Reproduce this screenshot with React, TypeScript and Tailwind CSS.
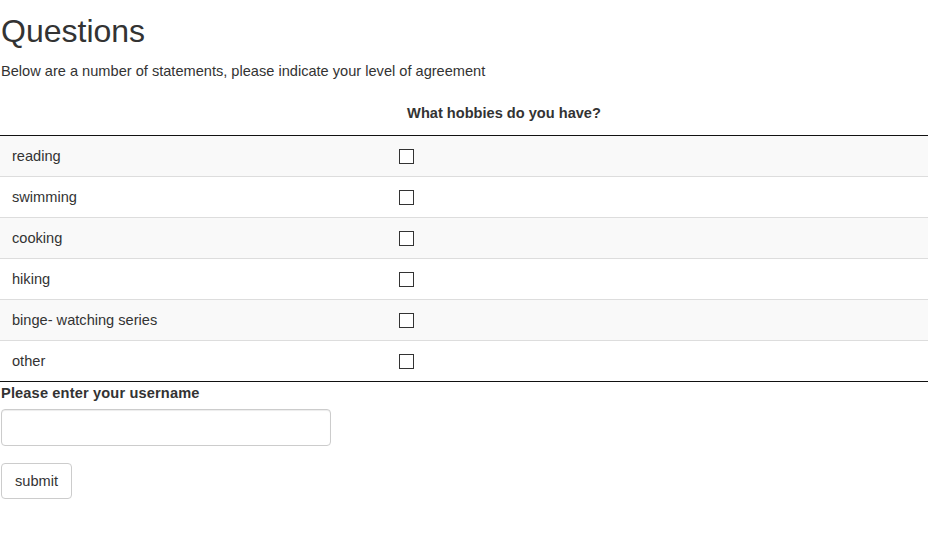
import React, { useState } from 'react';

const hobbies = ['reading', 'swimming', 'cooking', 'hiking', 'binge- watching series', 'other'];

const App: React.FC = () => {
  const [checked, setChecked] = useState<Record<string, boolean>>({});
  const [username, setUsername] = useState('');

  const toggle = (h: string) => setChecked({ ...checked, [h]: !checked[h] });

  return (
    <div
      className="min-h-screen bg-white text-[14.6px] leading-[20px] text-[#333]"
      style={{ fontFamily: '"Liberation Sans", Arial, Helvetica, sans-serif' }}
    >
      <div className="w-[928px]">
        <h1 className="mt-[14px] mb-[12px] pl-[1px] text-[32px] font-normal leading-[35px]">Questions</h1>
        <p className="mb-[10px] pl-[1px]">Below are a number of statements, please indicate your level of agreement</p>

        <div className="flex h-[45px] items-center border-b border-[#111]">
          <div className="w-[390px]" />
          <div className="w-[228px] text-center font-bold">What hobbies do you have?</div>
        </div>

        {hobbies.map((h, i) => (
          <div
            key={h}
            className={`flex h-[41px] items-center ${i % 2 === 0 ? 'bg-[#f9f9f9]' : 'bg-white'} ${
              i === hobbies.length - 1 ? 'border-b border-[#111]' : 'border-b border-[#ddd]'
            }`}
          >
            <div className="w-[390px] pl-[12px]">{h}</div>
            <div className="pl-[9px]">
              <button
                type="button"
                onClick={() => toggle(h)}
                className="flex h-[15px] w-[15px] items-center justify-center border border-[#333] bg-white text-[11px] leading-none"
              >
                {checked[h] ? '✓' : ''}
              </button>
            </div>
          </div>
        ))}

        <label className="mt-px block pl-[1px] font-bold tracking-[0.15px]">Please enter your username</label>
        <input
          type="text"
          value={username}
          onChange={(e) => setUsername(e.target.value)}
          className="mt-[6px] ml-[1px] block h-[37px] w-[330px] rounded-[4px] border border-[#ccc] px-3 shadow-[inset_0_1px_1px_rgba(0,0,0,0.075)] outline-none"
        />
        <button
          type="button"
          className="mt-[17px] ml-[1px] h-[36px] rounded-[4px] border border-[#ccc] bg-white px-[13px] text-[#333]"
        >
          submit
        </button>
      </div>
    </div>
  );
};

export default App;
